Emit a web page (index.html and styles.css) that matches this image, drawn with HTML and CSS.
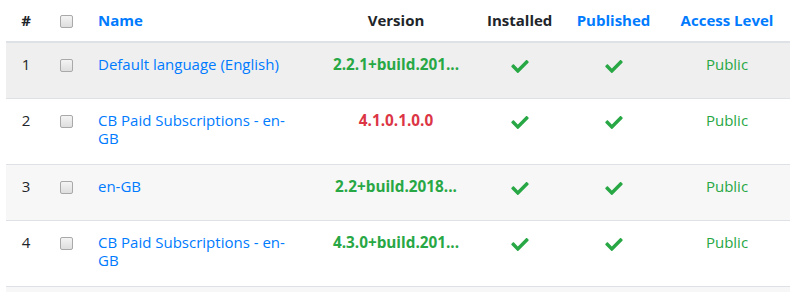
FILE: index.html
```html
<!DOCTYPE html>
<html>
<head>
<meta charset="utf-8">
<link rel="stylesheet" href="styles.css">
</head>
<body>
<table class="grid">
  <colgroup>
    <col class="c-num"><col class="c-chk"><col class="c-name"><col class="c-ver"><col class="c-inst"><col class="c-pub"><col class="c-acc">
  </colgroup>
  <thead>
    <tr>
      <th class="center">#</th>
      <th class="center"><span class="chk"></span></th>
      <th class="left link">Name</th>
      <th class="center">Version</th>
      <th class="center">Installed</th>
      <th class="center link">Published</th>
      <th class="center link">Access Level</th>
    </tr>
  </thead>
  <tbody>
    <tr class="row-hover">
      <td class="center">1</td>
      <td class="center"><span class="chk"></span></td>
      <td class="name"><a>Default language (English)</a></td>
      <td class="center ver ok"><div class="vbox">2.2.1+build.201...</div></td>
      <td class="center"><svg class="check" viewBox="0 65 512 382"><path d="M173.898 439.404l-166.4-166.4c-9.997-9.997-9.997-26.206 0-36.204l36.203-36.204c9.997-9.998 26.207-9.998 36.204 0L192 312.69 432.095 72.596c9.997-9.997 26.207-9.997 36.204 0l36.203 36.204c9.997 9.997 9.997 26.206 0 36.204l-294.4 294.401c-9.998 9.997-26.207 9.997-36.204-.001z"/></svg></td>
      <td class="center"><svg class="check" viewBox="0 65 512 382"><path d="M173.898 439.404l-166.4-166.4c-9.997-9.997-9.997-26.206 0-36.204l36.203-36.204c9.997-9.998 26.207-9.998 36.204 0L192 312.69 432.095 72.596c9.997-9.997 26.207-9.997 36.204 0l36.203 36.204c9.997 9.997 9.997 26.206 0 36.204l-294.4 294.401c-9.998 9.997-26.207 9.997-36.204-.001z"/></svg></td>
      <td class="center pub">Public</td>
    </tr>
    <tr>
      <td class="center">2</td>
      <td class="center"><span class="chk"></span></td>
      <td class="name"><a>CB Paid Subscriptions - en-GB</a></td>
      <td class="center ver bad"><div class="vbox">4.1.0.1.0.0</div></td>
      <td class="center"><svg class="check" viewBox="0 65 512 382"><path d="M173.898 439.404l-166.4-166.4c-9.997-9.997-9.997-26.206 0-36.204l36.203-36.204c9.997-9.998 26.207-9.998 36.204 0L192 312.69 432.095 72.596c9.997-9.997 26.207-9.997 36.204 0l36.203 36.204c9.997 9.997 9.997 26.206 0 36.204l-294.4 294.401c-9.998 9.997-26.207 9.997-36.204-.001z"/></svg></td>
      <td class="center"><svg class="check" viewBox="0 65 512 382"><path d="M173.898 439.404l-166.4-166.4c-9.997-9.997-9.997-26.206 0-36.204l36.203-36.204c9.997-9.998 26.207-9.998 36.204 0L192 312.69 432.095 72.596c9.997-9.997 26.207-9.997 36.204 0l36.203 36.204c9.997 9.997 9.997 26.206 0 36.204l-294.4 294.401c-9.998 9.997-26.207 9.997-36.204-.001z"/></svg></td>
      <td class="center pub">Public</td>
    </tr>
    <tr class="row-stripe">
      <td class="center">3</td>
      <td class="center"><span class="chk"></span></td>
      <td class="name"><a>en-GB</a></td>
      <td class="center ver ok"><div class="vbox">2.2+build.2018...</div></td>
      <td class="center"><svg class="check" viewBox="0 65 512 382"><path d="M173.898 439.404l-166.4-166.4c-9.997-9.997-9.997-26.206 0-36.204l36.203-36.204c9.997-9.998 26.207-9.998 36.204 0L192 312.69 432.095 72.596c9.997-9.997 26.207-9.997 36.204 0l36.203 36.204c9.997 9.997 9.997 26.206 0 36.204l-294.4 294.401c-9.998 9.997-26.207 9.997-36.204-.001z"/></svg></td>
      <td class="center"><svg class="check" viewBox="0 65 512 382"><path d="M173.898 439.404l-166.4-166.4c-9.997-9.997-9.997-26.206 0-36.204l36.203-36.204c9.997-9.998 26.207-9.998 36.204 0L192 312.69 432.095 72.596c9.997-9.997 26.207-9.997 36.204 0l36.203 36.204c9.997 9.997 9.997 26.206 0 36.204l-294.4 294.401c-9.998 9.997-26.207 9.997-36.204-.001z"/></svg></td>
      <td class="center pub">Public</td>
    </tr>
    <tr>
      <td class="center">4</td>
      <td class="center"><span class="chk"></span></td>
      <td class="name"><a>CB Paid Subscriptions - en-GB</a></td>
      <td class="center ver ok"><div class="vbox">4.3.0+build.201...</div></td>
      <td class="center"><svg class="check" viewBox="0 65 512 382"><path d="M173.898 439.404l-166.4-166.4c-9.997-9.997-9.997-26.206 0-36.204l36.203-36.204c9.997-9.998 26.207-9.998 36.204 0L192 312.69 432.095 72.596c9.997-9.997 26.207-9.997 36.204 0l36.203 36.204c9.997 9.997 9.997 26.206 0 36.204l-294.4 294.401c-9.998 9.997-26.207 9.997-36.204-.001z"/></svg></td>
      <td class="center"><svg class="check" viewBox="0 65 512 382"><path d="M173.898 439.404l-166.4-166.4c-9.997-9.997-9.997-26.206 0-36.204l36.203-36.204c9.997-9.998 26.207-9.998 36.204 0L192 312.69 432.095 72.596c9.997-9.997 26.207-9.997 36.204 0l36.203 36.204c9.997 9.997 9.997 26.206 0 36.204l-294.4 294.401c-9.998 9.997-26.207 9.997-36.204-.001z"/></svg></td>
      <td class="center pub">Public</td>
    </tr>
    <tr class="row-stripe">
      <td></td><td></td><td class="name"></td>
      <td><div class="vbox"></div></td>
      <td></td><td></td><td></td>
    </tr>
  </tbody>
</table>
</body>
</html>
```
FILE: styles.css
```css
html, body {
  margin: 0;
  padding: 0;
  background: #fff;
  overflow: hidden;
}
body {
  font-family: "Open Sans", "Noto Sans", "Liberation Sans", sans-serif;
  font-size: 15px;
  line-height: 18px;
  color: #212529;
}
.grid {
  margin-left: 6px;
  width: 785px;
  border-collapse: collapse;
  table-layout: fixed;
}
.c-num { width: 40px; }
.c-chk { width: 40px; }
.c-name { width: 231px; }
.c-ver { width: 158px; }
.c-inst { width: 89px; }
.c-pub { width: 99px; }
.c-acc { width: 128px; }
th {
  padding: 11px 12px 12px;
  font-weight: 700;
  border-bottom: 2px solid #dee2e6;
  vertical-align: top;
  white-space: nowrap;
}
td {
  padding: 12px 12px;
  vertical-align: top;
  border-bottom: 1px solid #dee2e6;
}
.center { text-align: center; }
.left { text-align: left; }
.link { color: #007bff; }
.name { padding-bottom: 17px; }
.name a { color: #007bff; }
.ver { font-weight: 700; font-size: 15.3px; }
.vbox {
  min-height: 31px;
  white-space: nowrap;
  overflow: hidden;
}
.ok { color: #28a745; }
.bad { color: #dc3545; }
.pub { color: #28a745; }
.row-hover td { background: #efefef; }
.row-stripe td { background: #f7f7f7; }
.chk {
  display: inline-block;
  width: 11px;
  height: 11px;
  border: 1px solid #a9a9a9;
  border-radius: 2px;
  background: linear-gradient(#f4f4f4, #dedede);
  vertical-align: -2px;
}
.check {
  width: 18px;
  height: 13px;
  fill: #28a745;
  vertical-align: -3px;
}
```
